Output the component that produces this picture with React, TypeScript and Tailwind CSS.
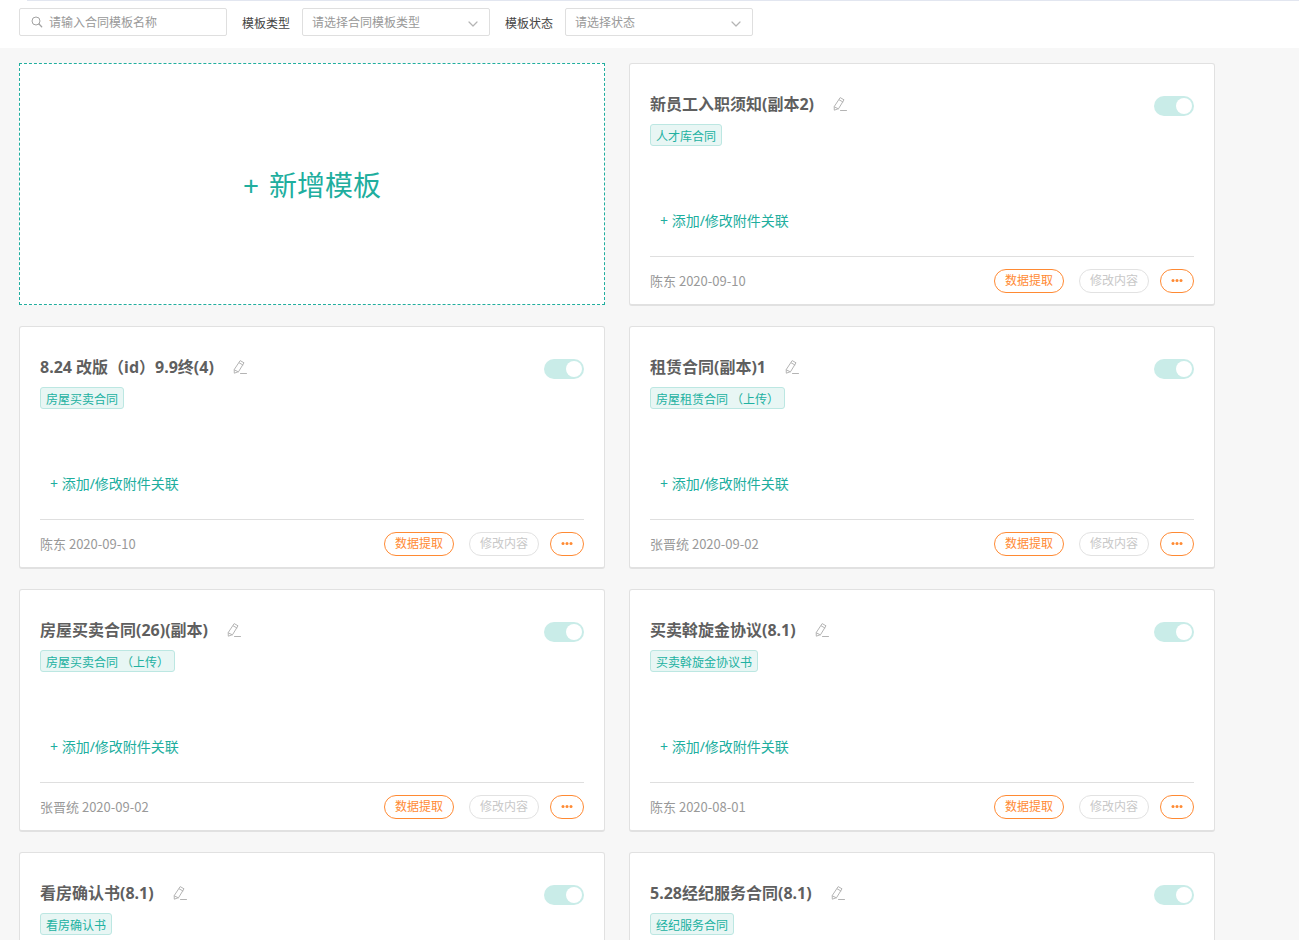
import React from "react";

type Template = {
  id: number;
  title: string;
  tag: string;
  author: string;
  date: string;
};

const templates: Template[] = [
  { id: 1, title: "新员工入职须知(副本2)", tag: "人才库合同", author: "陈东", date: "2020-09-10" },
  { id: 2, title: "8.24 改版（id）9.9终(4)", tag: "房屋买卖合同", author: "陈东", date: "2020-09-10" },
  { id: 3, title: "租赁合同(副本)1", tag: "房屋租赁合同 （上传）", author: "张晋统", date: "2020-09-02" },
  { id: 4, title: "房屋买卖合同(26)(副本)", tag: "房屋买卖合同 （上传）", author: "张晋统", date: "2020-09-02" },
  { id: 5, title: "买卖斡旋金协议(8.1)", tag: "买卖斡旋金协议书", author: "陈东", date: "2020-08-01" },
  { id: 6, title: "看房确认书(8.1)", tag: "看房确认书", author: "陈东", date: "2020-08-01" },
  { id: 7, title: "5.28经纪服务合同(8.1)", tag: "经纪服务合同", author: "陈东", date: "2020-08-01" },
];

function SearchIcon() {
  return (
    <svg viewBox="0 0 12 12" className="size-3 shrink-0 text-[#a3a3a3]" fill="none" stroke="currentColor" aria-hidden="true">
      <circle cx="5" cy="5" r="4" />
      <path d="M8 8l2.7 2.7" strokeWidth="1.3" strokeLinecap="round" />
    </svg>
  );
}

function ChevronIcon() {
  return (
    <svg viewBox="0 0 10 6" className="pointer-events-none absolute top-[13px] right-3 h-1.5 w-2.5 text-[#b4b4b4]" fill="none" stroke="currentColor" strokeWidth="1.2" aria-hidden="true">
      <path d="M1 1l4 4 4-4" strokeLinecap="round" strokeLinejoin="round" />
    </svg>
  );
}

function EditIcon() {
  return (
    <svg viewBox="0 0 14 14" className="size-3.5 text-[#b4b4b4]" fill="none" stroke="currentColor" strokeLinejoin="round" strokeLinecap="round" aria-hidden="true">
      <path d="M7.5 .8 11 2.8 5.6 11.6 1.3 13.2 1.2 10Z" />
      <path d="M6.3 2.9l3.5 2M1.4 9.9l3.9 1.9M7.5 13.5h6" />
    </svg>
  );
}

function FilterSelect({ id, label, placeholder, options }: { id: string; label: string; placeholder: string; options: string[] }) {
  return (
    <div className="flex items-center gap-3">
      <label htmlFor={id} className="pt-[3px] text-[#444444]">{label}</label>
      <div className="relative">
        <select id={id} defaultValue="" className="h-7 w-[188px] appearance-none rounded-[2px] border border-[#dfdfdf] bg-white pt-px pr-7 pl-[9px] text-[#999999] outline-none">
          <option value="">{placeholder}</option>
          {options.map((option) => (
            <option key={option}>{option}</option>
          ))}
        </select>
        <ChevronIcon />
      </div>
    </div>
  );
}

function TemplateCard({ template }: { template: Template }) {
  return (
    <article className="flex h-[243px] flex-col rounded-[3px] border border-b-2 border-[#e1e1e1] bg-white px-5">
      <div className="flex items-start justify-between pt-7">
        <div className="flex items-center gap-[19px]">
          <h2 className="text-base leading-6 font-bold text-[#5f5f5f]">{template.title}</h2>
          <button type="button" aria-label="编辑名称" className="cursor-pointer">
            <EditIcon />
          </button>
        </div>
        <input
          type="checkbox"
          role="switch"
          defaultChecked
          disabled
          aria-label={template.title}
          className="mt-1 h-5 w-10 appearance-none rounded-full bg-[#c9ece8] before:mt-0.5 before:ml-[22px] before:block before:size-4 before:rounded-full before:bg-white"
        />
      </div>
      <div className="mt-2 flex">
        <span className="h-[22px] rounded-[3px] border border-[#bce7e2] bg-[#e8f6f4] px-[5px] pt-0.5 text-xs leading-5 text-[#21b1a1]">{template.tag}</span>
      </div>
      <div className="flex flex-1 items-end pb-6">
        <button type="button" className="cursor-pointer px-2.5 text-sm leading-[22px] text-[#20ae9e]">+ 添加/修改附件关联</button>
      </div>
      <div className="flex h-12 items-center justify-between border-t border-[#dfdfdf]">
        <p className="font-['Noto_Sans_CJK_SC',sans-serif] text-[13px] leading-6 text-[#999999]">{template.author} {template.date}</p>
        <div className="flex items-center">
          <button type="button" className="h-6 w-[70px] cursor-pointer rounded-full border border-[#ff8a33] pt-px text-[#ff8a33]">数据提取</button>
          <button type="button" disabled className="ml-[15px] h-6 w-[70px] rounded-full border border-[#e2e2e2] pt-px text-[#c8c8c8]">修改内容</button>
          <button type="button" aria-label="更多" className="ml-[11px] flex h-6 w-[34px] cursor-pointer items-center justify-center rounded-full border border-[#ff8a33] text-[#ff8a33]">
            <svg viewBox="0 0 12 4" className="h-1 w-3" fill="currentColor" aria-hidden="true">
              <circle cx="2" cy="1.5" r="1.5" />
              <circle cx="6" cy="1.5" r="1.5" />
              <circle cx="10" cy="1.5" r="1.5" />
            </svg>
          </button>
        </div>
      </div>
    </article>
  );
}

export default function App() {
  return (
    <div className="flex h-screen flex-col overflow-hidden bg-[#f7f7f7] font-['Noto_Sans','Noto_Sans_CJK_SC',sans-serif] text-xs">
      <header className="bg-white">
        <div className="ml-[27px] h-px bg-[#e2e6f0]" />
        <form className="flex items-center gap-[15px] pt-[7px] pb-3 pl-[19px]">
          <div className="flex h-7 w-[208px] items-center gap-1.5 rounded-[2px] border border-[#dfdfdf] px-[11px]">
            <SearchIcon />
            <input type="text" aria-label="合同模板名称" placeholder="请输入合同模板名称" className="min-w-0 flex-1 pt-px outline-none placeholder:text-[#999999]" />
          </div>
          <FilterSelect id="template-type" label="模板类型" placeholder="请选择合同模板类型" options={["房屋买卖合同", "房屋租赁合同"]} />
          <FilterSelect id="template-status" label="模板状态" placeholder="请选择状态" options={["启用", "停用"]} />
        </form>
      </header>
      <main className="min-h-0 flex-1 overflow-y-auto pt-[15px] pr-[84px] pb-5 pl-[19px] [scrollbar-width:none]">
        <div className="grid grid-cols-2 items-start gap-x-6 gap-y-5">
          <button type="button" className="flex h-[242px] cursor-pointer items-center justify-center gap-2.5 border border-dashed border-[#20ae9e] bg-white pt-1 text-[28px] text-[#20ae9e]">
            <span>+</span>
            <span>新增模板</span>
          </button>
          {templates.map((template) => (
            <TemplateCard key={template.id} template={template} />
          ))}
        </div>
      </main>
    </div>
  );
}
